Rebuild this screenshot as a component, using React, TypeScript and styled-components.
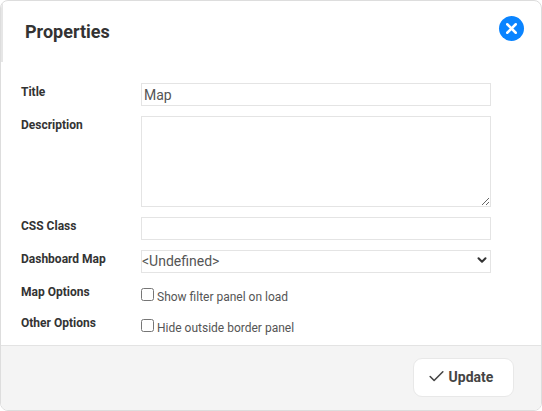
import React from 'react'
import styled, { createGlobalStyle } from 'styled-components'
import { Check, ChevronDown, X } from 'lucide-react'

const GlobalStyle = createGlobalStyle`
  html,
  body {
    margin: 0;
    padding: 0;
    background: #fff;
  }

  body {
    font-family: Roboto, 'Liberation Sans', sans-serif;
    color: #333;
  }
`

const Modal = styled.div`
  width: 542px;
  height: 411px;
  box-sizing: border-box;
  display: flex;
  flex-direction: column;
  border: 1px solid #ddd;
  border-radius: 8px;
  background: #fff;
  overflow: hidden;
`

const Header = styled.header`
  height: 61px;
  flex: none;
  box-sizing: border-box;
  display: flex;
  align-items: flex-start;
  justify-content: space-between;
  padding: 15px 17px 0 22px;
  border-left: 2px solid #e6e6e6;
`

const Title = styled.h1`
  margin: 1px 0 0;
  font-size: 18px;
  line-height: 30px;
  font-weight: 700;
  color: #333;
`

const CloseButton = styled.button`
  width: 25px;
  height: 25px;
  padding: 0;
  border: 0;
  border-radius: 50%;
  background: #0a84ff;
  color: #fff;
  display: flex;
  align-items: center;
  justify-content: center;
`

const Form = styled.form`
  flex: 1;
  display: grid;
  grid-template-columns: 120px 350px;
  grid-auto-rows: min-content;
  padding: 21px 0 0 20px;
`

const Label = styled.label`
  font-size: 12px;
  line-height: 14px;
  font-weight: 700;
  color: #333;
  padding-top: 2px;
`

const TextInput = styled.input`
  box-sizing: border-box;
  width: 350px;
  height: 23px;
  margin: 0 0 10px;
  padding: 0 2px;
  border: 1px solid #e4e4e4;
  border-radius: 0;
  outline: 0;
  font: 14px/20px Roboto, sans-serif;
  color: #555;
`

const TextArea = styled.textarea`
  box-sizing: border-box;
  display: block;
  width: 350px;
  height: 91px;
  margin: 0 0 10px;
  padding: 2px;
  border: 1px solid #e4e4e4;
  border-radius: 0;
  outline: 0;
  font: 14px Roboto, sans-serif;
`

const SelectWrap = styled.div`
  position: relative;
  width: 350px;
  height: 23px;
  margin-bottom: 10px;
`

const Select = styled.select`
  appearance: none;
  box-sizing: border-box;
  display: block;
  width: 100%;
  height: 100%;
  margin: 0;
  padding: 0 0 2px;
  border: 1px solid #e4e4e4;
  border-radius: 0;
  outline: 0;
  background: #fff;
  font: 14px Roboto, sans-serif;
  color: #555;
`

const SelectChevron = styled(ChevronDown)`
  position: absolute;
  top: 3px;
  right: 2px;
  color: #333;
  pointer-events: none;
`

const CheckRow = styled.div`
  display: flex;
  align-items: flex-start;
  height: 31px;
  font-size: 12px;
  line-height: 16px;
  color: #555;
`

const CheckBox = styled.input`
  width: 13px;
  height: 13px;
  margin: 5px 3px 0 0;
`

const CheckText = styled.span`
  margin-top: 6px;
`

const Footer = styled.footer`
  height: 65px;
  flex: none;
  box-sizing: border-box;
  display: flex;
  justify-content: flex-end;
  align-items: flex-start;
  padding: 12px 27px 0 0;
  border-top: 1px solid #e3e3e3;
  background: #f4f4f4;
`

const UpdateButton = styled.button`
  width: 101px;
  height: 39px;
  box-sizing: border-box;
  display: flex;
  align-items: center;
  justify-content: center;
  gap: 3px;
  padding: 0 7px 2px 0;
  border: 1px solid #e8e8e8;
  border-radius: 9px;
  background: #fff;
  font: 700 14px Roboto, sans-serif;
  color: #444;
`

const App = () => (
  <>
    <GlobalStyle />
    <Modal>
      <Header>
        <Title>Properties</Title>
        <CloseButton type="button" aria-label="Close">
          <X size={17} strokeWidth={3.5} />
        </CloseButton>
      </Header>
      <Form>
        <Label>Title</Label>
        <TextInput defaultValue="Map" />
        <Label>Description</Label>
        <TextArea />
        <Label>CSS Class</Label>
        <TextInput />
        <Label>Dashboard Map</Label>
        <SelectWrap>
          <Select defaultValue="undefined">
            <option value="undefined">&lt;Undefined&gt;</option>
          </Select>
          <SelectChevron size={14} strokeWidth={3.5} />
        </SelectWrap>
        <Label>Map Options</Label>
        <CheckRow>
          <CheckBox type="checkbox" />
          <CheckText>Show filter panel on load</CheckText>
        </CheckRow>
        <Label>Other Options</Label>
        <CheckRow>
          <CheckBox type="checkbox" />
          <CheckText>Hide outside border panel</CheckText>
        </CheckRow>
      </Form>
      <Footer>
        <UpdateButton type="button">
          <Check size={19} strokeWidth={2} />
          Update
        </UpdateButton>
      </Footer>
    </Modal>
  </>
)

export default App
